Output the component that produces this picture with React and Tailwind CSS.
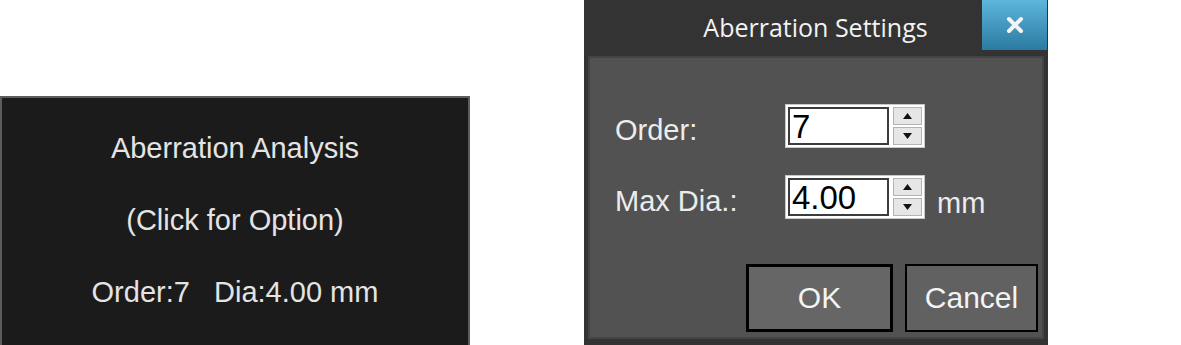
import { X } from "lucide-react";

function SpinBox({ value }) {
  return (
    <div className="flex h-[44px] items-center gap-[4px] border border-[#c8c8c8] bg-white p-[2px]">
      <div className="flex h-[38px] w-[101px] items-center border-2 border-[#3c3c3c] bg-white pl-[2px] text-[33px] leading-none text-black">
        {value}
      </div>
      <div className="flex h-[38px] w-[29px] flex-col gap-[2px]">
        <div className="flex flex-1 items-center justify-center border border-[#b4b4b4] bg-[#e6e6e6]">
          <svg width="9" height="6" viewBox="0 0 9 6">
            <path d="M0 6 L4.5 0 L9 6 Z" fill="#111" />
          </svg>
        </div>
        <div className="flex flex-1 items-center justify-center border border-[#b4b4b4] bg-[#e6e6e6]">
          <svg width="9" height="6" viewBox="0 0 9 6">
            <path d="M0 0 L4.5 6 L9 0 Z" fill="#111" />
          </svg>
        </div>
      </div>
    </div>
  );
}

export default function App() {
  return (
    <div className="flex h-[345px] w-[1181px] overflow-hidden bg-white font-['Liberation_Sans',Arial,sans-serif]">
      {/* analysis tile */}
      <div className="mt-[96px] flex h-[260px] w-[470px] shrink-0 flex-col items-center gap-[42px] border-2 border-[#5c5c5c] bg-[#1b1b1b] pt-[35px] text-[29px] leading-[30px] text-[#e4e4e4]">
        <div>Aberration Analysis</div>
        <div>(Click for Option)</div>
        <div className="whitespace-pre">Order:7   Dia:4.00 mm</div>
      </div>

      {/* settings dialog */}
      <div className="ml-[114px] flex h-[345px] w-[464px] shrink-0 flex-col bg-[#333333]">
        <div className="flex h-[56px] shrink-0">
          <div className="flex-1 pl-[65px] pt-[12px] text-center font-['Open_Sans',sans-serif] text-[25px] leading-[30px] text-[#f2f2f2]">
            Aberration Settings
          </div>
          <div className="mr-[1px] flex h-[50px] w-[65px] items-center justify-center bg-gradient-to-b from-[#5db6dc] to-[#2b7aa1]">
            <X size={24} strokeWidth={4} color="#f4f4f4" />
          </div>
        </div>

        <div className="mx-[4px] mb-[6px] flex flex-1 flex-col border-2 border-[#444] bg-[#525252] pl-[25px] text-[29px] leading-[30px] text-[#ececec]">
          <div className="mt-[46px] flex h-[44px] items-center">
            <div className="w-[170px] pt-[8px]">Order:</div>
            <SpinBox value="7" />
          </div>
          <div className="mt-[27px] flex h-[44px] items-center">
            <div className="w-[170px] pt-[8px]">Max Dia.:</div>
            <SpinBox value="4.00" />
            <div className="ml-[12px] pt-[12px]">mm</div>
          </div>
          <div className="mt-[45px] flex justify-end gap-[12px] pr-[4px]">
            <div className="flex h-[68px] w-[147px] items-center justify-center border-[3px] border-black bg-[#666666] text-[30px] text-[#f4f4f4]">
              OK
            </div>
            <div className="flex h-[68px] w-[133px] items-center justify-center border-2 border-black bg-[#616161] text-[30px] text-[#f4f4f4]">
              Cancel
            </div>
          </div>
        </div>
      </div>
    </div>
  );
}
